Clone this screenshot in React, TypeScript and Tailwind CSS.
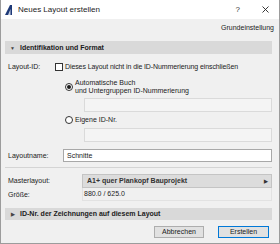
export default function App() {
  return (
    <div className="w-[280px] h-[244px] bg-[#f0f0f0] border-x border-b border-[#9c9c9c] font-['Liberation_Sans',sans-serif] text-[7px] leading-[10px] text-[#1b1b1b] flex flex-col overflow-hidden">
      {/* Title bar */}
      <div className="h-[19px] bg-white flex items-center pl-[4px] pr-[10px] shrink-0">
        <svg width="7" height="10" viewBox="0 0 7 10" className="mr-[6px]">
          <polygon points="0,10 5,0 7,0 7,10" fill="#1f3a78" />
          <polygon points="3,10 5.5,4 5.5,10" fill="#c9d3e6" />
        </svg>
        <span className="text-[8px]">Neues Layout erstellen</span>
        <span className="ml-auto text-[8px] text-[#333]">?</span>
        <svg width="7" height="7" viewBox="0 0 7 7" className="ml-[22px]">
          <path d="M0.5 0.5 L6.5 6.5 M6.5 0.5 L0.5 6.5" stroke="#222" strokeWidth="0.9" />
        </svg>
      </div>

      {/* Body */}
      <div className="flex flex-col pl-[4px] pr-[7px]">
        <div className="mt-[4px] h-[10px] text-right -mr-[2px]">Grundeinstellung</div>

        <div className="mt-[8px] h-[13px] bg-[#d9d9d9] flex items-center pl-[5px] font-bold">
          <span className="text-[5px] mr-[5px] text-[#444]">▼</span>
          Identifikation und Format
        </div>

        <div className="mt-[8px] h-[10px] flex items-center">
          <span className="w-[50px] pl-[3px]">Layout-ID:</span>
          <span className="w-[8px] h-[8px] border border-[#333] bg-white mr-[2px]" />
          <span className="tracking-[-0.1px]">Dieses Layout nicht in die ID-Nummerierung einschließen</span>
        </div>

        <div className="mt-[7px] flex items-center pl-[60px]">
          <span className="w-[8px] h-[8px] rounded-full border border-[#333] bg-white flex items-center justify-center mr-[2px]">
            <span className="w-[4px] h-[4px] rounded-full bg-[#1b1b1b]" />
          </span>
          <div className="leading-[8px]">
            <div>Automatische Buch</div>
            <div>und Untergruppen ID-Nummerierung</div>
          </div>
        </div>

        <div className="mt-[3px] ml-[79px] h-[14px] border border-[#dadada] bg-[#f4f4f4]" />

        <div className="mt-[3px] h-[10px] flex items-center pl-[60px]">
          <span className="w-[8px] h-[8px] rounded-full border border-[#333] bg-white mr-[2px]" />
          <span>Eigene ID-Nr.</span>
        </div>

        <div className="mt-[3px] ml-[79px] h-[14px] border border-[#dadada] bg-[#f4f4f4]" />

        <div className="mt-[7px] h-[13px] flex items-center">
          <span className="w-[58px] pl-[3px]">Layoutname:</span>
          <div className="flex-1 h-full border border-[#a8a8a8] bg-white flex items-center pl-[3px]">Schnitte</div>
        </div>

        <div className="mt-[5px] h-px bg-[#d4d4d4]" />

        <div className="mt-[6px] h-[14px] flex items-center">
          <span className="w-[77px] pl-[3px]">Masterlayout:</span>
          <div className="flex-1 h-full border border-[#c4c4c4] bg-[#dcdcdc] flex items-center pl-[4px] font-bold text-[#333]">
            A1+ quer Plankopf Bauprojekt
            <span className="ml-auto mr-[3px] text-[5px]">▶</span>
          </div>
        </div>

        <div className="h-[13px] flex items-center">
          <span className="w-[77px] pl-[3px]">Größe:</span>
          <div className="flex-1 h-full border-x border-b border-[#e2e2e2] flex items-center pl-[1px]">880.0 / 625.0</div>
        </div>

        <div className="mt-[7px] h-[12px] bg-[#d9d9d9] flex items-center pl-[6px] font-bold">
          <span className="text-[5px] mr-[5px] text-[#444]">▶</span>
          ID-Nr. der Zeichnungen auf diesem Layout
        </div>

        <div className="mt-[6px] flex justify-end gap-[14px] pr-[3px]">
          <button className="w-[50px] h-[12px] border border-[#adadad] bg-[#e1e1e1] text-[7px] leading-[10px]">Abbrechen</button>
          <button className="w-[51px] h-[12px] border border-[#0078d7] bg-[#e1e1e1] text-[7px] leading-[10px]">Erstellen</button>
        </div>
      </div>
    </div>
  );
}
